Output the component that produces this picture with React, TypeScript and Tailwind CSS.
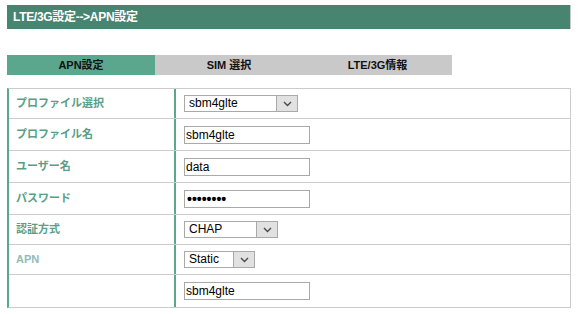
const font = { fontFamily: '"Liberation Sans", "Noto Sans CJK JP", sans-serif' };

const Chevron = () => (
  <svg width="9" height="6" viewBox="0 0 9 6">
    <path d="M1 1 L4.5 4.5 L8 1" fill="none" stroke="#4a4a4a" strokeWidth="1.4" />
  </svg>
);

const Select = ({ value, width }: { value: string; width: string }) => (
  <div className={`flex h-[17px] ${width} border border-[#a9a9a9] bg-white`}>
    <div className="flex-1 pl-[4px] text-[12px] leading-[15px] text-black">{value}</div>
    <div className="flex w-[21px] items-center justify-center border-l border-[#a9a9a9] bg-[#e1e1e1]">
      <Chevron />
    </div>
  </div>
);

const Input = ({ value, dots }: { value: string; dots?: boolean }) => (
  <div
    className={`h-[18px] w-[126px] border border-[#a9a9a9] bg-white text-black ${
      dots ? "pl-[2px] text-[14px] font-bold leading-[16px]" : "pl-[1px] text-[12px] leading-[16px]"
    }`}
  >
    {value}
  </div>
);

const rows: { label: string; h: string; field: React.ReactNode; muted?: boolean }[] = [
  { label: "プロファイル選択", h: "h-[30px]", field: <Select value="sbm4glte" width="w-[114px]" /> },
  { label: "プロファイル名", h: "h-[32px]", field: <Input value="sbm4glte" /> },
  { label: "ユーザー名", h: "h-[32px]", field: <Input value="data" /> },
  { label: "パスワード", h: "h-[32px]", field: <Input value="••••••••" dots /> },
  { label: "認証方式", h: "h-[30px]", field: <Select value="CHAP" width="w-[94px]" /> },
  { label: "APN", h: "h-[30px]", field: <Select value="Static" width="w-[71px]" />, muted: true },
  { label: "", h: "h-[32px]", field: <Input value="sbm4glte" /> },
];

export default function App() {
  return (
    <div className="h-[314px] w-[579px] bg-white px-[7px] pt-[5px]" style={font}>
      <div className="flex h-[24px] w-[564px] items-center border-r border-[#c8c8c8] bg-[#478571] pl-[6px] text-[12px] font-bold tracking-[-0.3px] text-white">
        LTE/3G設定--&gt;APN設定
      </div>

      <div className="mt-[26px] flex h-[20px] w-[445px] text-[11px] font-bold text-[#111]">
        <div className="flex w-[148px] items-center justify-center bg-[#5aa78e]">APN設定</div>
        <div className="flex w-[148px] items-center justify-center bg-[#c9c9c9]">SIM 選択</div>
        <div className="flex flex-1 items-center justify-center bg-[#c9c9c9]">LTE/3G情報</div>
      </div>

      <div className="mt-[13px] w-[564px] border-y border-r border-l-2 border-[#cccccc] border-l-[#5aa88a]">
        {rows.map((r, i) => (
          <div
            key={i}
            className={`flex ${r.h} ${i < rows.length - 1 ? "border-b border-[#cccccc]" : ""}`}
          >
            <div
              className={`flex w-[167px] items-center border-r-2 border-[#5aa88a] pl-[7px] text-[11px] font-bold ${
                r.muted ? "text-[#8fbcb8]" : "text-[#5a9e86]"
              }`}
            >
              {r.label}
            </div>
            <div className="flex flex-1 items-center pl-[8px]">{r.field}</div>
          </div>
        ))}
      </div>
    </div>
  );
}
